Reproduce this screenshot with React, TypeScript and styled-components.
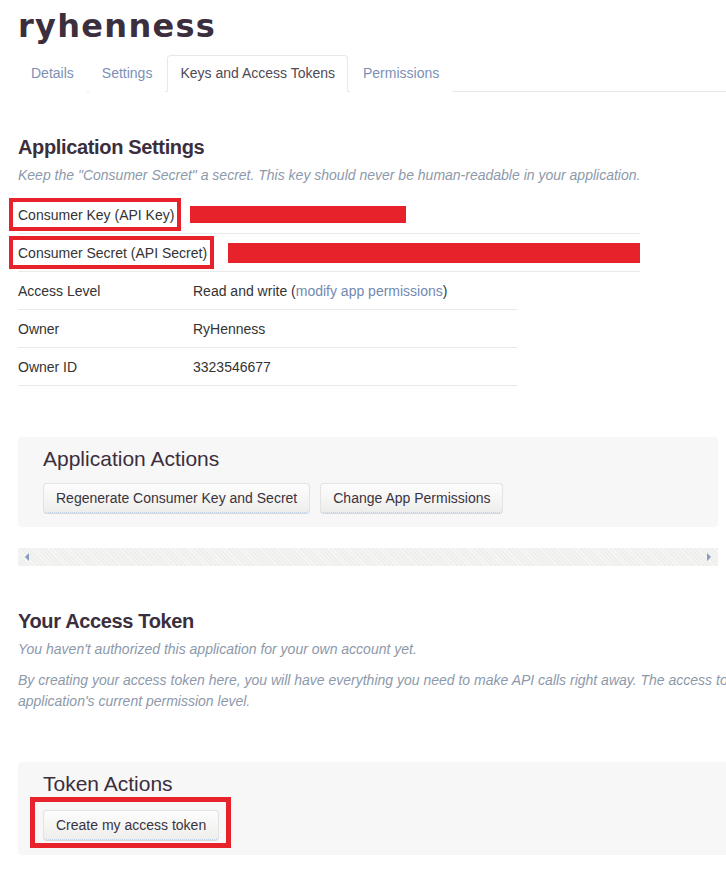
import React from "react";
import styled, { createGlobalStyle } from "styled-components";

const Global = createGlobalStyle`
  html, body { margin: 0; padding: 0; background: #fff; }
  body {
    font-family: "Liberation Sans", Arial, sans-serif;
    color: #333;
    overflow: hidden;
    width: 726px;
    height: 876px;
  }
`;

const Page = styled.div`
  padding-left: 18px;
  width: 1100px;
`;

const Title = styled.h1`
  margin: 0;
  font-family: "DejaVu Sans", sans-serif;
  font-weight: bold;
  font-size: 32px;
  letter-spacing: 1.3px;
  line-height: 46px;
  color: #3b2e3d;
  height: 55px;
  box-sizing: border-box;
  padding-top: 3px;
`;

const Tabs = styled.ul`
  display: flex;
  list-style: none;
  margin: 0;
  padding: 0;
  width: 708px;
  border-bottom: 1px solid #e6e9ec;
`;

const Tab = styled.li<{ $active?: boolean }>`
  margin: 0 2px -1px 0;
  padding: 0 12px;
  height: 35px;
  line-height: 35px;
  font-size: 14px;
  border: 1px solid ${(p) => (p.$active ? "#e6e9ec" : "transparent")};
  border-bottom-color: ${(p) => (p.$active ? "#fff" : "transparent")};
  border-radius: 4px 4px 0 0;
  background: #fff;
  color: ${(p) => (p.$active ? "#4f4a55" : "#7c90b6")};
`;

const SectionHeading = styled.h2<{ $top: number }>`
  margin: ${(p) => p.$top}px 0 0 0;
  font-size: 20px;
  line-height: 24px;
  font-weight: bold;
  letter-spacing: -0.35px;
  color: #3b2e3d;
`;

const Note = styled.p<{ $top: number }>`
  margin: ${(p) => p.$top}px 0 0 0;
  font-size: 14px;
  line-height: 21px;
  font-style: italic;
  color: #8d99ab;
`;

const NoWrapLine = styled.span`
  display: block;
  white-space: nowrap;
`;

const Table = styled.div`
  margin-top: 10px;
  display: flex;
  flex-direction: column;
`;

const Row = styled.div<{ $width: number }>`
  display: flex;
  align-items: center;
  width: ${(p) => p.$width}px;
  height: 37px;
  border-bottom: 1px solid #e8e9eb;
  font-size: 14px;
  color: #333;
`;

const Label = styled.div`
  min-width: 175px;
  flex-shrink: 0;
  line-height: 20px;
`;

const Marked = styled.span`
  position: relative;
  display: inline-block;
  &::after {
    content: "";
    position: absolute;
    left: -9px;
    right: -7px;
    top: -7px;
    bottom: -6px;
    border: 4px solid #e8222a;
  }
`;

const Value = styled.div`
  display: flex;
  align-items: center;
  line-height: 20px;
`;

const Redaction = styled.span<{ $width: number; $height: number; $offset: number }>`
  display: inline-block;
  width: ${(p) => p.$width}px;
  height: ${(p) => p.$height}px;
  margin-left: ${(p) => p.$offset}px;
  background: #e8222a;
`;

const Link = styled.span`
  color: #7389b0;
`;

const Well = styled.div<{ $width: number; $top: number; $pt: number; $pb: number }>`
  margin-top: ${(p) => p.$top}px;
  width: ${(p) => p.$width}px;
  box-sizing: border-box;
  padding: ${(p) => p.$pt}px 25px ${(p) => p.$pb}px 25px;
  background: #f7f7f7;
  border-radius: 4px;
`;

const WellHeading = styled.h3<{ $gap: number }>`
  margin: 0 0 ${(p) => p.$gap}px 0;
  font-size: 21px;
  line-height: 24px;
  font-weight: normal;
  color: #3b2e3d;
`;

const ButtonRow = styled.div`
  display: flex;
  gap: 10px;
`;

const Button = styled.button`
  height: 30px;
  padding: 0 12px;
  font-family: "Liberation Sans", Arial, sans-serif;
  font-size: 14px;
  color: #3a3340;
  background: linear-gradient(#fdfdfd, #eeeeec);
  border: 1px solid #e3e3e3;
  border-bottom: 1px dotted #a9c6e6;
  border-radius: 4px;
  box-shadow: 0 1px 0 #d8d8d8;
  cursor: pointer;
`;

const Annotated = styled.div`
  position: relative;
  display: inline-flex;
  &::after {
    content: "";
    position: absolute;
    left: -13px;
    right: -12px;
    top: -13px;
    bottom: -8px;
    border: 5px solid #e8222a;
  }
`;

const Scrollbar = styled.div`
  margin-top: 21px;
  width: 700px;
  height: 18px;
  display: flex;
  align-items: center;
  justify-content: space-between;
  padding: 0 7px;
  box-sizing: border-box;
  background-color: #efefed;
  background-image: repeating-linear-gradient(45deg, rgba(255,255,255,0.5) 0 1px, transparent 1px 3px);
`;

const Arrow = styled.span<{ $dir: "left" | "right" }>`
  width: 0;
  height: 0;
  border-top: 4px solid transparent;
  border-bottom: 4px solid transparent;
  ${(p) =>
    p.$dir === "left"
      ? "border-right: 4px solid #8a9cc0;"
      : "border-left: 4px solid #8a9cc0;"}
`;

export default function App() {
  return (
    <>
      <Global />
      <Page>
        <Title>ryhenness</Title>
        <Tabs>
          <Tab>Details</Tab>
          <Tab>Settings</Tab>
          <Tab $active>Keys and Access Tokens</Tab>
          <Tab>Permissions</Tab>
        </Tabs>

        <SectionHeading $top={43}>Application Settings</SectionHeading>
        <Note $top={6}>
          Keep the "Consumer Secret" a secret. This key should never be human-readable in your application.
        </Note>

        <Table>
          <Row $width={622}>
            <Label>
              <Marked>Consumer Key (API Key)</Marked>
            </Label>
            <Value>
              <Redaction $width={216} $height={17} $offset={-3} />
            </Value>
          </Row>
          <Row $width={622}>
            <Label>
              <Marked>Consumer Secret (API Secret)</Marked>
            </Label>
            <Value>
              <Redaction $width={412} $height={20} $offset={21} />
            </Value>
          </Row>
          <Row $width={499}>
            <Label>Access Level</Label>
            <Value>
              Read and write&nbsp;(<Link>modify app permissions</Link>)
            </Value>
          </Row>
          <Row $width={499}>
            <Label>Owner</Label>
            <Value>RyHenness</Value>
          </Row>
          <Row $width={499}>
            <Label>Owner ID</Label>
            <Value>3323546677</Value>
          </Row>
        </Table>

        <Well $width={700} $top={51} $pt={10} $pb={14}>
          <WellHeading $gap={12}>Application Actions</WellHeading>
          <ButtonRow>
            <Button>Regenerate Consumer Key and Secret</Button>
            <Button>Change App Permissions</Button>
          </ButtonRow>
        </Well>

        <Scrollbar>
          <Arrow $dir="left" />
          <Arrow $dir="right" />
        </Scrollbar>

        <SectionHeading $top={43}>Your Access Token</SectionHeading>
        <Note $top={6}>You haven't authorized this application for your own account yet.</Note>
        <Note $top={10}>
          <NoWrapLine>
            By creating your access token here, you will have everything you need to make API calls right away. The access token generated will be assigned your
          </NoWrapLine>
          <NoWrapLine>application's current permission level.</NoWrapLine>
        </Note>

        <Well $width={900} $top={50} $pt={10} $pb={15}>
          <WellHeading $gap={14}>Token Actions</WellHeading>
          <ButtonRow>
            <Annotated>
              <Button>Create my access token</Button>
            </Annotated>
          </ButtonRow>
        </Well>
      </Page>
    </>
  );
}
